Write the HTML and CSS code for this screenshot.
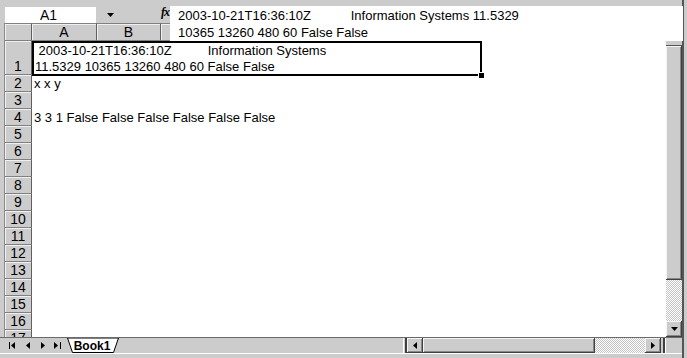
FILE: index.html
```html
<!DOCTYPE html>
<html lang="en">
<head>
  <meta charset="UTF-8">
  <meta name="viewport" content="width=device-width, initial-scale=1.0">
  <title>Book1</title>
  <link rel="stylesheet" href="styles.css">
</head>
<body>
  <div class="app">
    <!-- Name box and fx -->
    <div class="topbar">
      <div class="namebox">A1</div>
      <div class="namedrop">
        <svg width="7" height="4" viewBox="0 0 7 4"><polygon points="0,0 7,0 3.5,4" fill="#000"/></svg>
      </div>
      <div class="fx">fx</div>
    </div>

    <!-- Expanded formula bar, lies over the column headers -->
    <div class="formula">
      <div class="fline">2003-10-21T16:36:10Z           Information Systems 11.5329</div>
      <div class="fline">10365 13260 480 60 False False</div>
    </div>

    <div class="main">
      <div class="grid">
        <div class="colheads">
          <div class="corner"></div>
          <div class="colhead col-a">A</div>
          <div class="colhead col-b">B</div>
          <div class="colhead col-c">C</div>
        </div>

        <div class="row row-tall">
          <div class="rowhead">1</div>
          <div class="cells">
            <div class="active-cell">
              <div class="line"> 2003-10-21T16:36:10Z          Information Systems</div>
              <div class="line">11.5329 10365 13260 480 60 False False</div>
              <span class="fill-handle"></span>
            </div>
          </div>
        </div>
        <div class="row"><div class="rowhead">2</div><div class="cells">x x y</div></div>
        <div class="row"><div class="rowhead">3</div><div class="cells"></div></div>
        <div class="row"><div class="rowhead">4</div><div class="cells">3 3 1 False False False False False False</div></div>
        <div class="row"><div class="rowhead">5</div><div class="cells"></div></div>
        <div class="row"><div class="rowhead">6</div><div class="cells"></div></div>
        <div class="row"><div class="rowhead">7</div><div class="cells"></div></div>
        <div class="row"><div class="rowhead">8</div><div class="cells"></div></div>
        <div class="row"><div class="rowhead">9</div><div class="cells"></div></div>
        <div class="row"><div class="rowhead">10</div><div class="cells"></div></div>
        <div class="row"><div class="rowhead">11</div><div class="cells"></div></div>
        <div class="row"><div class="rowhead">12</div><div class="cells"></div></div>
        <div class="row"><div class="rowhead">13</div><div class="cells"></div></div>
        <div class="row"><div class="rowhead">14</div><div class="cells"></div></div>
        <div class="row"><div class="rowhead">15</div><div class="cells"></div></div>
        <div class="row"><div class="rowhead">16</div><div class="cells"></div></div>
        <div class="row"><div class="rowhead">17</div><div class="cells"></div></div>
      </div>

      <!-- Vertical scrollbar -->
      <div class="vscroll">
        <div class="btn3d vbtn"></div>
        <div class="vgap"></div>
        <div class="btn3d vthumb"></div>
        <div class="checker vtrack"></div>
        <div class="btn3d vbtn">
          <svg width="7" height="4" viewBox="0 0 7 4"><polygon points="0,0 7,0 3.5,4" fill="#000"/></svg>
        </div>
      </div>
    </div>

    <!-- Sheet tabs and horizontal scrollbar -->
    <div class="tabbar">
      <div class="tabnav">
        <span class="navbtn">
          <svg width="7" height="7" viewBox="0 0 7 7"><rect x="0" y="0" width="1" height="7"/><polygon points="6,0 6,7 2,3.5"/></svg>
        </span>
        <span class="navbtn">
          <svg width="4" height="7" viewBox="0 0 4 7"><polygon points="4,0 4,7 0,3.5"/></svg>
        </span>
        <span class="navbtn">
          <svg width="4" height="7" viewBox="0 0 4 7"><polygon points="0,0 0,7 4,3.5"/></svg>
        </span>
        <span class="navbtn">
          <svg width="7" height="7" viewBox="0 0 7 7"><polygon points="0,0 0,7 4,3.5"/><rect x="6" y="0" width="1" height="7"/></svg>
        </span>
      </div>
      <div class="tab">
        <svg class="tab-shape" width="54" height="15" viewBox="0 0 54 15">
          <polygon points="1.5,0 6.5,14.5 47.5,14.5 52.5,0" fill="#fff" stroke="#000" stroke-width="1"/>
        </svg>
        <span class="tab-label">Book1</span>
      </div>
      <div class="tabspace"></div>
      <div class="hsplit"></div>
      <div class="btn3d hbtn">
        <svg width="4" height="7" viewBox="0 0 4 7"><polygon points="4,0 4,7 0,3.5"/></svg>
      </div>
      <div class="btn3d hthumb"></div>
      <div class="checker htrack"></div>
      <div class="btn3d hbtn">
        <svg width="4" height="7" viewBox="0 0 4 7"><polygon points="0,0 0,7 4,3.5"/></svg>
      </div>
      <div class="hsplit2"></div>
      <div class="corner-box"></div>
    </div>
    <div class="status"></div>
  </div>
</body>
</html>
```

FILE: styles.css
```css
/* General */
body {
  margin: 0;
  padding: 0;
  font-family: "Liberation Sans", Arial, sans-serif;
  font-size: 13px;
  color: #000;
  background: #cccccc;
}

.app {
  position: relative;
  width: 687px;
  height: 358px;
  box-sizing: border-box;
  padding-right: 5px;
  background: #cccccc;
  box-shadow: inset -3px 0 #cccccc, inset -5px 0 #555;
  overflow: hidden;
}

/* Name box row */
.topbar {
  height: 23px;
  display: flex;
  align-items: flex-start;
}

.namebox {
  margin: 7px 0 0 5px;
  width: 91px;
  height: 16px;
  background: #fff;
  text-align: center;
  line-height: 16px;
  font-size: 14px;
  box-sizing: border-box;
  padding-right: 4px;
}

.namedrop {
  margin: 13px 0 0 9px;
  width: 10px;
  display: flex;
  justify-content: center;
}

.fx {
  margin: 5px 0 0 46px;
  font-family: "Liberation Serif", serif;
  font-style: italic;
  font-weight: bold;
  font-size: 12px;
  letter-spacing: -1px;
}

/* Formula bar (expanded) */
.formula {
  position: absolute;
  left: 170px;
  top: 6px;
  width: 513px;
  height: 35px;
  background: #fff;
  box-sizing: border-box;
  padding: 1px 0 0 8px;
}

.fline {
  white-space: pre;
  line-height: 17px;
}

/* Sheet */
.main {
  display: flex;
  height: 314px;
  margin-left: 4px;
}

.grid {
  flex: 1;
  border-left: 1px solid #8a8a8a;
  background: #fff;
  overflow: hidden;
}

.colheads {
  display: flex;
  height: 18px;
  background: #cccccc;
}

.corner, .colhead {
  box-sizing: border-box;
  border-top: 1px solid #808080;
  border-right: 1px solid #606060;
  border-bottom: 1px solid #808080;
  box-shadow: inset 1px 1px #f0f0f0;
  text-align: center;
  line-height: 17px;
  font-size: 14px;
}

.corner { width: 27px; }
.col-a { width: 65px; }
.col-b { width: 64px; }
.col-c { flex: 1; }

.row {
  display: flex;
  height: 17px;
}

.row-tall {
  height: 34px;
}

.rowhead {
  width: 27px;
  flex: none;
  box-sizing: border-box;
  background: #cccccc;
  border-right: 1px solid #606060;
  border-bottom: 1px solid #808080;
  box-shadow: inset 1px 1px #f0f0f0;
  display: flex;
  align-items: flex-end;
  justify-content: center;
  line-height: 15px;
  font-size: 14px;
}

.cells {
  flex: 1;
  padding-left: 2px;
  line-height: 18px;
  white-space: nowrap;
}

.row-tall .cells {
  padding-left: 0;
}

.active-cell {
  position: relative;
  width: 450px;
  height: 35px;
  box-sizing: border-box;
  border: 2px solid #000;
  padding-left: 1px;
}

.active-cell .line {
  line-height: 16px;
  white-space: pre;
}

.fill-handle {
  position: absolute;
  right: -4px;
  bottom: -4px;
  width: 5px;
  height: 5px;
  background: #000;
  border: 1px solid #fff;
  border-width: 1px 0 0 1px;
}

/* Scrollbars */
.btn3d {
  background: #cccccc;
  box-shadow: inset -1px -1px #404040, inset 1px 1px #f4f4f4, inset -2px -2px #888;
  display: flex;
  align-items: center;
  justify-content: center;
}

.checker {
  background-color: #fff;
  background-image: conic-gradient(#c4c4c4 25%, #fff 0 50%, #c4c4c4 0 75%, #fff 0);
  background-size: 2px 2px;
}

.vscroll {
  width: 16px;
  display: flex;
  flex-direction: column;
}

.vbtn {
  height: 16px;
}

.vgap {
  height: 6px;
  background: #cccccc;
  border-bottom: 1px solid #555;
}

.vthumb {
  height: 234px;
}

.vtrack {
  flex: 1;
}

.tabbar {
  display: flex;
  height: 15px;
  border-top: 1px solid #6a6a6a;
  box-sizing: content-box;
}

.tabnav {
  display: flex;
  padding-left: 5px;
  width: 61px;
}

.navbtn {
  width: 15px;
  display: flex;
  align-items: center;
  justify-content: center;
}

.tab {
  position: relative;
  width: 54px;
  height: 15px;
  display: flex;
  align-items: center;
  justify-content: center;
}

.tab-shape {
  position: absolute;
  left: 0;
  top: 0;
}

.tab-label {
  position: relative;
  font-weight: bold;
  font-size: 12px;
  margin-left: -2px;
}

.tabspace {
  flex: 1;
}

.hsplit {
  width: 4px;
  border-left: 1px solid #fff;
  border-right: 2px solid #404040;
  box-sizing: border-box;
}

.hbtn {
  width: 16px;
}

.hthumb {
  width: 172px;
}

.htrack {
  width: 50px;
}

.hsplit2 {
  width: 5px;
  box-sizing: border-box;
  border-right: 1px solid #fff;
  box-shadow: inset -2px 0 #404040;
}

.corner-box {
  width: 16px;
}

.status {
  height: 5px;
  border-top: 1px solid #fff;
}
```
